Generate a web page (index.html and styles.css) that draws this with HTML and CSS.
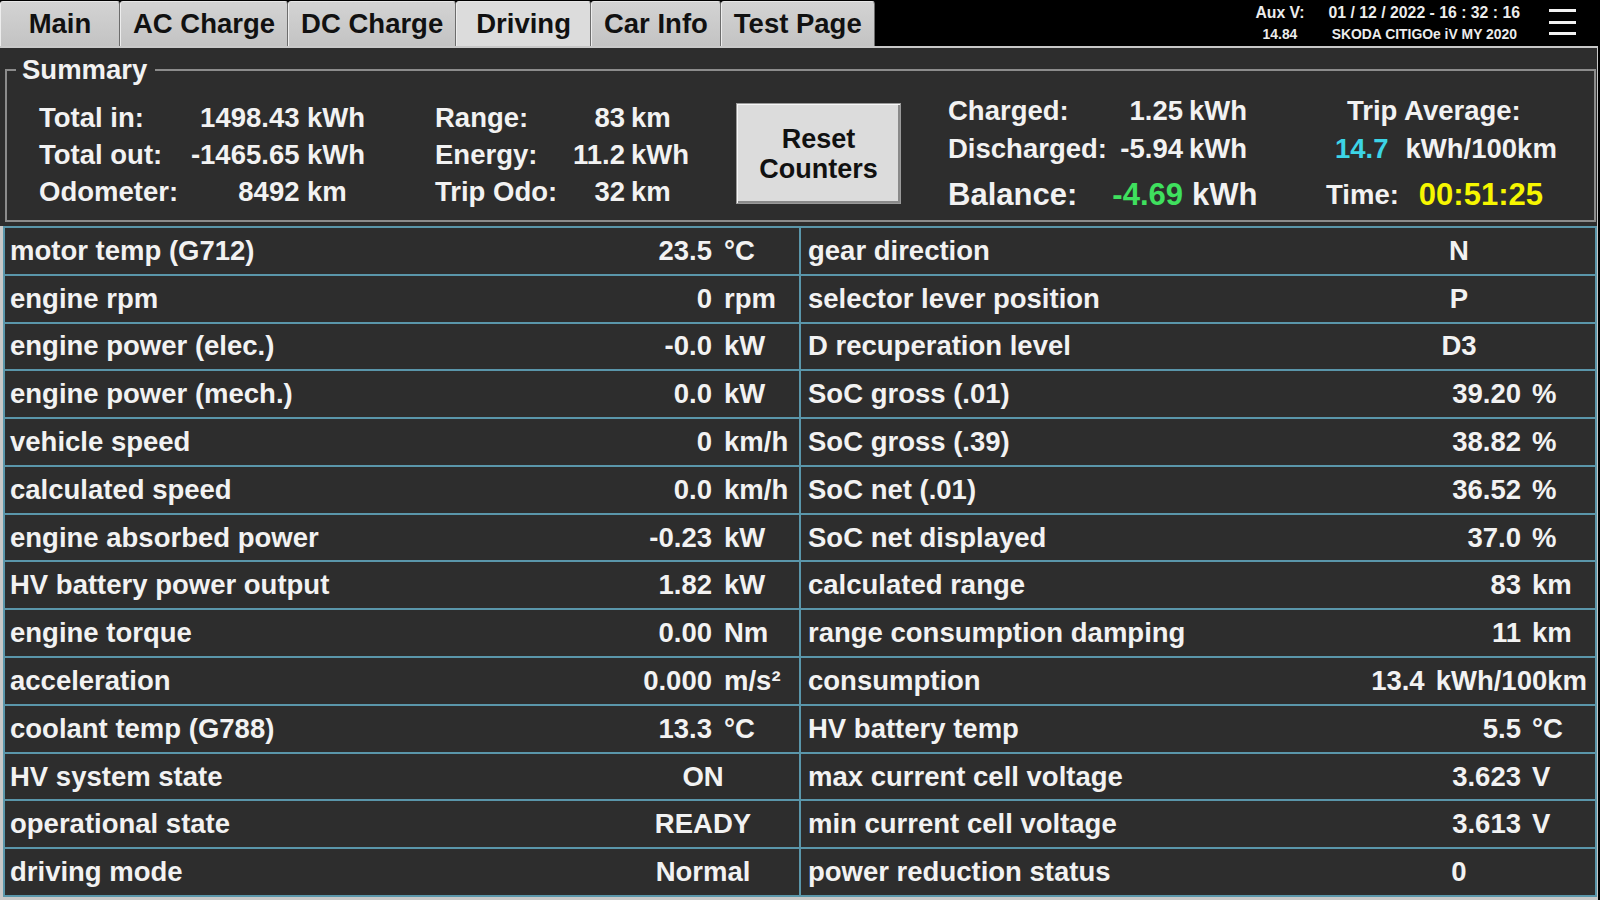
FILE: index.html
```html
<!DOCTYPE html>
<html lang="en">
<head>
<meta charset="utf-8">
<title>Driving</title>
<link rel="stylesheet" href="styles.css">
</head>
<body>
<header class="topbar">
  <nav class="tabs">
    <div class="tab">Main</div>
    <div class="tab">AC Charge</div>
    <div class="tab">DC Charge</div>
    <div class="tab active">Driving</div>
    <div class="tab">Car Info</div>
    <div class="tab">Test Page</div>
  </nav>
  <div class="status">
    <div class="aux">
      <span class="l1">Aux V:</span>
      <span class="l2">14.84</span>
    </div>
    <div class="date">
      <span class="l1">01 / 12 / 2022 - 16 : 32 : 16</span>
      <span class="l2">SKODA CITIGOe iV MY 2020</span>
    </div>
    <div class="menu"><span></span><span></span><span></span></div>
  </div>
</header>

<main class="panel">
  <fieldset class="summary">
    <legend>Summary</legend>
    <div class="sum-body">
      <div class="totals">
        <span>Total in:</span><span class="num">1498.43</span><span class="unit">kWh</span>
        <span>Range:</span><span class="num">83</span><span class="unit u2">km</span>
        <span>Total out:</span><span class="num">-1465.65</span><span class="unit">kWh</span>
        <span>Energy:</span><span class="num">11.2</span><span class="unit u2">kWh</span>
        <span>Odometer:</span><span class="num">8492</span><span class="unit">km</span>
        <span>Trip Odo:</span><span class="num">32</span><span class="unit u2">km</span>
      </div>
      <button class="reset">Reset<br>Counters</button>
      <div class="energy">
        <span>Charged:</span><span class="num">1.25</span><span class="unit">kWh</span>
        <span class="trip t1">Trip Average:</span>
        <span>Discharged:</span><span class="num">-5.94</span><span class="unit">kWh</span>
        <span class="trip t2"><span class="cyan">14.7</span><span class="tu">kWh/100km</span></span>
        <span class="big">Balance:</span><span class="num big green">-4.69</span><span class="unit big">kWh</span>
        <span class="trip t3"><span>Time:</span><span class="big yellow tv">00:51:25</span></span>
      </div>
    </div>
  </fieldset>

  <section class="table-wrap">
    <div class="grid">
      <div class="cell"><span>motor temp (G712)</span><span class="v">23.5</span><span>°C</span></div>
      <div class="cell r"><span>gear direction</span><span class="c">N</span></div>
      <div class="cell"><span>engine rpm</span><span class="v">0</span><span>rpm</span></div>
      <div class="cell r"><span>selector lever position</span><span class="c">P</span></div>
      <div class="cell"><span>engine power (elec.)</span><span class="v">-0.0</span><span>kW</span></div>
      <div class="cell r"><span>D recuperation level</span><span class="c">D3</span></div>
      <div class="cell"><span>engine power (mech.)</span><span class="v">0.0</span><span>kW</span></div>
      <div class="cell r"><span>SoC gross (.01)</span><span class="v">39.20</span><span>%</span></div>
      <div class="cell"><span>vehicle speed</span><span class="v">0</span><span>km/h</span></div>
      <div class="cell r"><span>SoC gross (.39)</span><span class="v">38.82</span><span>%</span></div>
      <div class="cell"><span>calculated speed</span><span class="v">0.0</span><span>km/h</span></div>
      <div class="cell r"><span>SoC net (.01)</span><span class="v">36.52</span><span>%</span></div>
      <div class="cell"><span>engine absorbed power</span><span class="v">-0.23</span><span>kW</span></div>
      <div class="cell r"><span>SoC net displayed</span><span class="v">37.0</span><span>%</span></div>
      <div class="cell"><span>HV battery power output</span><span class="v">1.82</span><span>kW</span></div>
      <div class="cell r"><span>calculated range</span><span class="v">83</span><span>km</span></div>
      <div class="cell"><span>engine torque</span><span class="v">0.00</span><span>Nm</span></div>
      <div class="cell r"><span>range consumption damping</span><span class="v">11</span><span>km</span></div>
      <div class="cell"><span>acceleration</span><span class="v">0.000</span><span>m/s²</span></div>
      <div class="cell r"><span>consumption</span><span class="v">13.4</span><span>kWh/100km</span></div>
      <div class="cell"><span>coolant temp (G788)</span><span class="v">13.3</span><span>°C</span></div>
      <div class="cell r"><span>HV battery temp</span><span class="v">5.5</span><span>°C</span></div>
      <div class="cell"><span>HV system state</span><span class="c">ON</span></div>
      <div class="cell r"><span>max current cell voltage</span><span class="v">3.623</span><span>V</span></div>
      <div class="cell"><span>operational state</span><span class="c">READY</span></div>
      <div class="cell r"><span>min current cell voltage</span><span class="v">3.613</span><span>V</span></div>
      <div class="cell"><span>driving mode</span><span class="c">Normal</span></div>
      <div class="cell r"><span>power reduction status</span><span class="c">0</span></div>
    </div>
  </section>
</main>
</body>
</html>
```
FILE: styles.css
```css
* { box-sizing: border-box; }
html, body { margin: 0; padding: 0; }
body {
  width: 1600px;
  height: 900px;
  overflow: hidden;
  background: #000;
  font-family: "Liberation Sans", Arial, sans-serif;
  font-weight: 700;
  color: #f2f2f2;
}

/* ---------- top bar ---------- */
.topbar {
  display: flex;
  height: 46px;
  background: #000;
}
.tabs {
  display: flex;
  padding-top: 1px;
}
.tab {
  min-width: 120px;
  height: 45px;
  padding: 0 12px;
  display: flex;
  align-items: center;
  justify-content: center;
  font-size: 27.5px;
  color: #111;
  background: linear-gradient(#d3d3d3, #c3c3c3);
  border-top: 1px solid #e6e6e6;
  border-left: 1px solid #ededed;
  border-right: 1px solid #6c6c6c;
  border-radius: 3px 3px 0 0;
  white-space: nowrap;
}
.tab.active {
  padding: 0 19px;
  background: #dcdcdc;
}
.status {
  margin-left: auto;
  display: flex;
  align-items: flex-start;
  padding-right: 24px;
  color: #ececec;
}
.aux, .date {
  display: flex;
  flex-direction: column;
  align-items: center;
  padding-top: 2px;
  white-space: pre;
}
.aux { margin-right: 24px; }
.date { margin-right: 29px; }
.l1 { font-size: 15.8px; line-height: 21px; }
.l2 { font-size: 13.9px; line-height: 22px; }
.menu {
  width: 27px;
  display: flex;
  flex-direction: column;
  gap: 8.5px;
  padding-top: 9px;
}
.menu span {
  display: block;
  height: 3px;
  background: #f2f2f2;
}

/* ---------- panel ---------- */
.panel {
  height: 854px;
  width: 1598px;
  background: #2d2d2d;
  border-top: 2px solid #c8c8c8;
  border-right: 1px solid #c8c8c8;
  display: flex;
  flex-direction: column;
}

/* ---------- summary group ---------- */
.summary {
  margin: 6px 1px 4px 5px;
  padding: 0;
  border: 2px solid #8c8c8c;
  min-width: 0;
}
.summary legend {
  margin-left: 9px;
  padding: 0 8px 0 6px;
  font-size: 27.5px;
  line-height: 32px;
  color: #f2f2f2;
}
.sum-body {
  height: 134px;
  display: flex;
  align-items: flex-start;
  padding-left: 32px;
  font-size: 27.5px;
  white-space: nowrap;
}
.totals {
  display: grid;
  grid-template-columns: 146.5px 114px 135.5px 132px 58px 111px;
  grid-auto-rows: 37px;
  align-items: center;
  padding-top: 13px;
}
.num { text-align: right; }
.unit { padding-left: 7.5px; }
.totals .u2 { padding-left: 6px; }

.reset {
  width: 165px;
  height: 101px;
  margin-top: 17px;
  padding: 0;
  background: #dcdcdc;
  border: 1px solid #9a9a9a;
  box-shadow: inset 1px 1px 0 #f6f6f6, inset -2px -2px 0 #8a8a8a;
  font-family: "Liberation Sans", Arial, sans-serif;
  font-weight: 700;
  font-size: 27px;
  line-height: 30px;
  color: #111;
}

.energy {
  margin-left: 47px;
  padding-top: 6px;
  display: grid;
  grid-template-columns: 162px 73px 117px 290px;
  grid-template-rows: 38px 38px 54px;
  align-items: center;
}
.energy .unit { padding-left: 6px; }
.energy .unit.big { padding-left: 9px; }
.big { font-size: 31px; }
.green { color: #3fe05e; }
.cyan { color: #3cd4e6; }
.yellow { color: #f6f600; }
.trip { display: flex; align-items: center; }
.t1 { padding-left: 47px; }
.t2 { padding-left: 35px; }
.t2 .tu { margin-left: 17px; }
.t3 { padding-left: 26px; }
.t3 .tv { margin-left: 20px; }

/* ---------- data table ---------- */
.table-wrap {
  flex: 1;
  border-left: 3px solid #c8c8c8;
  border-bottom: 3px solid #c8c8c8;
}
.grid {
  height: 100%;
  display: grid;
  grid-template-columns: 1fr 1fr;
  grid-template-rows: repeat(14, 1fr);
  gap: 2px;
  padding: 2px;
  background: #5a96aa;
}
.cell {
  background: #2d2d2d;
  display: grid;
  grid-template-columns: minmax(0, 1fr) 97px minmax(67px, auto);
  column-gap: 12px;
  align-items: center;
  padding: 0 8px 0 5px;
  font-size: 27.5px;
  white-space: nowrap;
  min-width: 0;
}
.cell.r {
  grid-template-columns: minmax(0, 1fr) 190px minmax(55px, auto);
  column-gap: 11px;
  padding-left: 7px;
}
.cell .v { text-align: right; }
.cell .c { grid-column: 2 / 4; text-align: center; }
```
